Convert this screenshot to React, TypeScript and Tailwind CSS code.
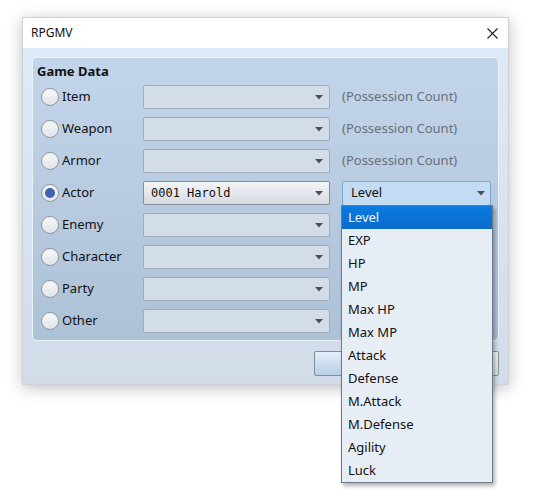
import React from "react";

const ui = { fontFamily: '"Noto Sans", "DejaVu Sans", sans-serif' };
const mono = { fontFamily: '"DejaVu Sans Mono", "Liberation Mono", monospace' };

const rows = ["Item", "Weapon", "Armor", "Actor", "Enemy", "Character", "Party", "Other"];
const params = ["Level", "EXP", "HP", "MP", "Max HP", "Max MP", "Attack", "Defense", "M.Attack", "M.Defense", "Agility", "Luck"];

function Arrow() {
	return (
		<svg width="8" height="5" viewBox="0 0 8 5" className="shrink-0">
			<path d="M0 0H8L4 4.5Z" fill="#4a4f55" />
		</svg>
	);
}

function Radio({ checked }: { checked?: boolean }) {
	return (
		<div className="w-[18px] h-[18px] rounded-full border border-[#8e959c] bg-[linear-gradient(to_bottom,#f6f7f8,#e2e6ea)] flex items-center justify-center shrink-0">
			{checked && <div className="w-[10px] h-[10px] rounded-full bg-[#3f62b4]" />}
		</div>
	);
}

function Combo({ value, active }: { value?: string; active?: boolean }) {
	return (
		<div
			className={
				"w-[187px] h-[24px] rounded-[2px] border flex items-center justify-between pl-[7px] pr-[6px] " +
				(active
					? "border-[#878f98] bg-[linear-gradient(to_bottom,#f3f4f6,#d6dbe1)]"
					: "border-[#a3acb6] bg-[#d3dde7]")
			}
		>
			<span className="text-[12px] text-[#111]" style={mono}>{value}</span>
			<Arrow />
		</div>
	);
}

function App() {
	return (
		<div className="w-[545px] h-[499px] bg-white pt-[17px] pl-[22px] relative" style={ui}>
			<div className="w-[487px] h-[368px] border border-[#cfd3d8] bg-white shadow-[0_3px_14px_rgba(0,0,0,0.25)] flex flex-col">
				<div className="h-[30px] flex items-center justify-between pl-[8px] pr-[10px]">
					<span className="text-[12px] text-[#111]">RPGMV</span>
					<svg width="11" height="11" viewBox="0 0 11 11">
						<path d="M0.5 0.5L10.5 10.5M10.5 0.5L0.5 10.5" stroke="#222" strokeWidth="1.1" />
					</svg>
				</div>
				<div className="flex-1 bg-[linear-gradient(to_bottom,#dfeaf8,#d1dce8)] pt-[9px] px-[9px] flex flex-col">
					<div className="h-[284px] rounded-[5px] border border-[#e8f0f8] bg-[linear-gradient(to_bottom,#c2d5ea,#adc1d7)] pl-[8px] pt-[3px]">
						<div className="text-[13px] font-bold text-[#111] h-[20px] leading-[20px] -ml-[4px]">Game Data</div>
						{rows.map((r, i) => (
							<div key={r} className="h-[32px] flex items-center">
								<Radio checked={r === "Actor"} />
								<span className="w-[84px] pl-[3px] text-[13px] text-[#111]">{r}</span>
								<Combo value={r === "Actor" ? "0001 Harold" : undefined} active={r === "Actor"} />
								{i < 3 && <span className="ml-[12px] text-[13px] text-[#68707a]">(Possession Count)</span>}
								{r === "Actor" && (
									<div className="ml-[12px] w-[149px] h-[25px] rounded-[2px] border border-[#7fa6cc] bg-[#c4dcf3] flex items-center justify-between pl-[8px] pr-[5px]">
										<span className="text-[13px] text-[#111]">Level</span>
										<Arrow />
									</div>
								)}
							</div>
						))}
					</div>
					{/* OK / Cancel sit under the open list */}
					<div className="flex justify-end gap-[9px] mt-[10px]">
						<div className="w-[88px] h-[25px] rounded-[2px] border border-[#7c8c9c] bg-[linear-gradient(to_bottom,#e4eefa,#b7cfe8)]" />
						<div className="w-[88px] h-[25px] rounded-[2px] border border-[#8a929a] bg-[linear-gradient(to_bottom,#f2f4f6,#d9dee4)]" />
					</div>
				</div>
			</div>
			<div className="absolute left-[341px] top-[205px] w-[152px] border border-[#6f7c88] bg-[#e6edf4] shadow-[2px_3px_4px_rgba(0,0,0,0.3)]">
				{params.map((p, i) => (
					<div
						key={p}
						className={
							"h-[23px] flex items-center pl-[6px] text-[13px] " +
							(i === 0 ? "bg-[linear-gradient(to_bottom,#0b7ae0,#0a6cca)] text-[#eef4ff]" : "text-[#111]")
						}
					>
						{p}
					</div>
				))}
			</div>
		</div>
	);
}

export default App;
